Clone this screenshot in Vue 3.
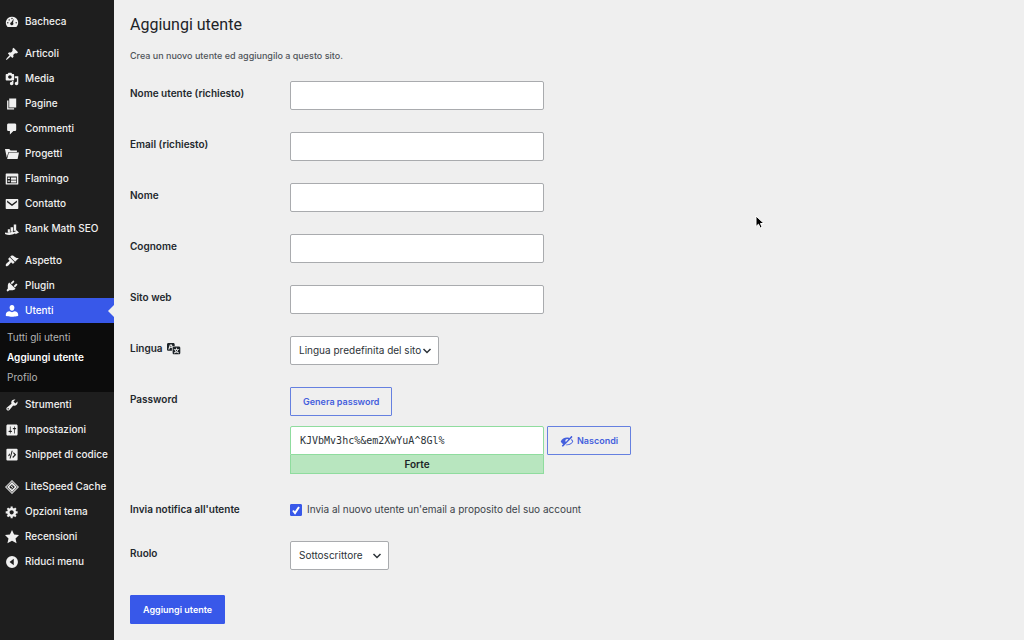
<script setup>
import { ref } from 'vue'

const icons = {
  dashboard: 'M3.76 17h12.48A8.5 8.5 0 0 0 10 2.500a8.500 8.500 0 0 0-6.240 14.500zM10 4a1 1 0 1 1 0 2 1 1 0 0 1 0-2zM6 6a1 1 0 1 1 0 2 1 1 0 0 1 0-2zM12.500 5.500L11.500 11a2.200 2.200 0 1 1-2.500-.8zM4 10a1 1 0 1 1 0 2 1 1 0 0 1 0-2zm12 0a1 1 0 1 1 0 2 1 1 0 0 1 0-2z',
  pin: 'M10.44 3.02l1.82-1.82 6.36 6.35-1.83 1.82c-1.05-.68-2.48-.57-3.41.36l-.75.75c-.92.93-1.04 2.35-.35 3.41l-1.83 1.82-2.41-2.41-2.8 2.79c-.42.42-3.38 2.71-3.8 2.29s1.86-3.39 2.28-3.81l2.79-2.79L4.1 9.36l1.83-1.82c1.05.69 2.48.57 3.4-.36l.75-.75c.93-.92 1.05-2.35.36-3.41z',
  media: 'M13 11V4c0-.55-.45-1-1-1h-1.67L9 1H5L3.67 3H2c-.55 0-1 .45-1 1v7c0 .55.45 1 1 1h10c.55 0 1-.45 1-1zM7 4.500c1.380 0 2.500 1.120 2.500 2.500S8.380 9.500 7 9.500 4.500 8.380 4.500 7 5.620 4.500 7 4.500zM14 6h5v10.500c0 1.380-1.120 2.500-2.500 2.500S14 17.880 14 16.500s1.120-2.500 2.500-2.500c.17 0 .34.02.5.05V9h-3V6zm-4 8.050V13h2v3.500c0 1.380-1.120 2.500-2.500 2.500S7 17.880 7 16.500 8.120 14 9.500 14c.17 0 .34.02.5.05z',
  page: 'M6 15V2h10v13H6zm-1 1h8v2H3V5h2v11z',
  comment: 'M5 2h9c1.100 0 2 .9 2 2v7c0 1.100-.9 2-2 2h-2l-5 5v-5H5c-1.100 0-2-.9-2-2V4c0-1.100.9-2 2-2z',
  folder: 'M0 3h6l2 2h9v2H5L2.500 15zM5.500 8H20l-2 9H3z',
  feedback: 'M2 2h16c.55 0 1 .45 1 1v14c0 .55-.45 1-1 1H2c-.55 0-1-.45-1-1V3c0-.55.45-1 1-1zM3 6.500V16h14V6.500zM4 8h3v2H4zm4.500 0H16v3H8.500zM4 12h3v2H4zm4.500 0H16v3H8.500z',
  mail: 'M2 3h16a1 1 0 0 1 1 1v12a1 1 0 0 1-1 1H2a1 1 0 0 1-1-1V4a1 1 0 0 1 1-1zM3 5v2.500l7 5.500 7-5.500V5l-7 5.500z',
  chart: 'M4 10.500h3v4.500l-3 1zM8 7.500h3.500v5L8 15zM12.500 3.500H16V12l-3.500 1zM0 15c4 1.500 8.500-.5 11-2.500l1 2 4-1.500v-1.500l4 3.500-5 2.500-.5-1.500C10 19 4 19 0 17z',
  brush: 'M14.48 11.06L7.41 3.99l1.5-1.5c.5-.56 2.3-.47 3.51.32 1.21.8 1.43 1.28 2.91 2.1 1.18.64 2.45 1.26 4.45.85zm-.71.71L6.7 4.7 4.93 6.47c-.39.39-.39 1.02 0 1.41l1.06 1.06c.39.39.39 1.03 0 1.42-.6.6-1.43 1.11-2.21 1.69-.35.26-.7.53-1.01.84C1.43 14.23.4 16.08 1.4 17.07c.99 1 2.84-.03 4.18-1.36.31-.31.58-.66.85-1.02.57-.78 1.08-1.61 1.69-2.21.39-.39 1.02-.39 1.41 0l1.06 1.06c.39.39 1.02.39 1.41 0z',
  plug: 'M13.11 4.36L9.87 7.6 8 5.73l3.24-3.24c.35-.34 1.05-.2 1.56.32.52.51.66 1.21.31 1.55zm-8 1.77l.91-1.12 9.01 9.01-1.19.84c-.71.71-2.63 1.16-3.82 1.16H6.14L4.9 17.26c-.59.59-1.54.59-2.12 0-.59-.58-.59-1.53 0-2.12l1.24-1.24v-3.88c0-1.13.4-3.19 1.09-3.89zm7.26 3.97l3.24-3.24c.34-.35 1.04-.21 1.55.31.52.51.66 1.21.31 1.55l-3.24 3.25z',
  user: 'M10 1.500c2.600 0 3.700 2.100 3.400 4.300C13.100 8 12 9.700 10 9.700S6.900 8 6.600 5.800C6.300 3.600 7.400 1.500 10 1.500zM6.500 10.200L10 11.800l3.500-1.600c3.300.2 5.300 2.300 5.300 4.600v2.400s-4 1-8.800 1-8.800-1-8.800-1v-2.400c0-2.300 2-4.400 5.300-4.600z',
  wrench: 'M16.68 9.77c-1.34 1.34-3.3 1.67-4.95.99l-5.41 6.52c-.99.99-2.59.99-3.58 0s-.99-2.59 0-3.57l6.52-5.42c-.68-1.65-.35-3.61.99-4.95 1.28-1.28 3.12-1.62 4.72-1.06l-2.89 2.89 2.82 2.82 2.86-2.87c.53 1.58.18 3.39-1.08 4.65zM3.81 16.21c.4.39 1.04.39 1.43 0 .4-.4.4-1.04 0-1.43-.39-.4-1.03-.4-1.43 0-.39.39-.39 1.03 0 1.43z',
  sliders: 'M18 16V4c0-1.1-.9-2-2-2H4c-1.1 0-2 .9-2 2v12c0 1.1.9 2 2 2h12c1.1 0 2-.9 2-2zM8 11h1c.55 0 1 .45 1 1s-.45 1-1 1H8v1.5c0 .28-.22.5-.5.5s-.5-.22-.5-.5V13H6c-.55 0-1-.45-1-1s.45-1 1-1h1V5.5c0-.28.22-.5.5-.5s.5.22.5.5V11zm5-2h-1c-.55 0-1-.45-1-1s.45-1 1-1h1V5.5c0-.28.22-.5.5-.5s.5.22.5.5V7h1c.55 0 1 .45 1 1s-.45 1-1 1h-1v5.5c0 .28-.22.5-.5.5s-.5-.22-.5-.5V9z',
  code: 'M3.500 1h13A1.500 1.500 0 0 1 18 2.500v14a1.500 1.500 0 0 1-1.500 1.500h-13A1.500 1.500 0 0 1 2 16.500v-14A1.500 1.500 0 0 1 3.500 1zM9.500 4L6.500 15H8l3-11zM7 7.500L4.500 10.500l1.200 1.500L7 10zM12.500 6l-1 1.300 2 2.500-3 3 1 1.400L16 9.800z',
  diamond: 'M10 0l10 10-10 10L0 10zM10 1.800L1.800 10l8.200 8.200 8.200-8.200zM10 3l7 7-7 7-7-7zM10 6l-4 4 4 4 4-4zM11 6.500L8 10h2l-1 3.500 3-4h-2z',
  gear: 'M18 12h-2.18c-.17.7-.44 1.35-.81 1.93l1.54 1.54-2.1 2.1-1.54-1.54c-.58.36-1.23.63-1.91.79V19H8v-2.18c-.68-.16-1.33-.43-1.91-.79l-1.54 1.54-2.12-2.12 1.54-1.54c-.36-.58-.63-1.23-.79-1.91H1V9.03h2.17c.16-.7.44-1.35.8-1.94L2.43 5.55l2.1-2.1 1.54 1.54c.58-.37 1.24-.64 1.93-.81V2h3v2.18c.68.16 1.33.43 1.91.79l1.54-1.54 2.12 2.12-1.54 1.54c.36.59.64 1.24.8 1.94H18V12zm-8.5 1.5c1.66 0 3-1.34 3-3s-1.34-3-3-3-3 1.34-3 3 1.34 3 3 3z',
  star: 'M10 0l3 6.500 7 .7-5 4.800L16.500 19 10 15.500 3.500 19 5 12 0 7.200l7-.7z',
  collapse: 'M10 1.500a8.500 8.500 0 1 1 0 17 8.500 8.500 0 0 1 0-17zM12.500 5.500L6.500 10l6 4.500z'
}

const groups = [
  [{ label: 'Bacheca', icon: 'dashboard' }],
  [
    { label: 'Articoli', icon: 'pin' },
    { label: 'Media', icon: 'media' },
    { label: 'Pagine', icon: 'page' },
    { label: 'Commenti', icon: 'comment' },
    { label: 'Progetti', icon: 'folder' },
    { label: 'Flamingo', icon: 'feedback' },
    { label: 'Contatto', icon: 'mail' },
    { label: 'Rank Math SEO', icon: 'chart' }
  ],
  [
    { label: 'Aspetto', icon: 'brush' },
    { label: 'Plugin', icon: 'plug' },
    { label: 'Utenti', icon: 'user', active: true, sub: ['Tutti gli utenti', 'Aggiungi utente', 'Profilo'] },
    { label: 'Strumenti', icon: 'wrench' },
    { label: 'Impostazioni', icon: 'sliders' },
    { label: 'Snippet di codice', icon: 'code' }
  ],
  [
    { label: 'LiteSpeed Cache', icon: 'diamond' },
    { label: 'Opzioni tema', icon: 'gear' },
    { label: 'Recensioni', icon: 'star' }
  ]
]

const fields = [
  { id: 'username', label: 'Nome utente', required: true },
  { id: 'email', label: 'Email', required: true },
  { id: 'first', label: 'Nome' },
  { id: 'last', label: 'Cognome' },
  { id: 'site', label: 'Sito web' }
]

const values = ref({ username: '', email: '', first: '', last: '', site: '' })
const password = ref('KJVbMv3hc%&em2XwYuA^8Gl%')
const notify = ref(true)
</script>

<template>
  <div class="admin">
    <nav class="sidebar" aria-label="Menu principale">
      <ul v-for="(group, g) in groups" :key="g" class="group">
        <li v-for="item in group" :key="item.label">
          <a href="#" class="item" :class="{ active: item.active }">
            <svg class="icon" viewBox="0 0 20 20" aria-hidden="true"><path fill-rule="evenodd" :d="icons[item.icon]" /></svg>
            <span>{{ item.label }}</span>
          </a>
          <ul v-if="item.sub" class="submenu">
            <li v-for="(s, i) in item.sub" :key="s"><a href="#" :class="{ current: i === 1 }">{{ s }}</a></li>
          </ul>
        </li>
      </ul>
      <button type="button" class="item collapse">
        <svg class="icon" viewBox="0 0 20 20" aria-hidden="true"><path fill-rule="evenodd" :d="icons.collapse" /></svg>
        <span>Riduci menu</span>
      </button>
    </nav>

    <main class="content">
      <h1>Aggiungi utente</h1>
      <p class="intro">Crea un nuovo utente ed aggiungilo a questo sito.</p>
      <form @submit.prevent>
        <div v-for="f in fields" :key="f.id" class="row">
          <label class="name" :for="f.id">{{ f.label }} <span v-if="f.required">(richiesto)</span></label>
          <input :id="f.id" v-model="values[f.id]" class="text" type="text">
        </div>
        <div class="row">
          <label class="name lang" for="lang">Lingua
            <svg class="translate" viewBox="0 0 20 20" aria-hidden="true"><path d="M11 7H9.49c-.63 0-1.25.3-1.59.7L7 5H4.13l-2.39 7h1.69l.74-2H7v4H2c-1.1 0-2-.9-2-2V5c0-1.1.9-2 2-2h7c1.1 0 2 .9 2 2v2zM6.51 9H4.49l1-2.93zM10 8h7c1.1 0 2 .9 2 2v7c0 1.1-.9 2-2 2h-7c-1.1 0-2-.9-2-2v-7c0-1.1.9-2 2-2zm7.25 5v-1.08h-3.17V9.75h-1.16v2.17H9.75V13h1.28c.11.85.56 1.85 1.28 2.62-.87.36-1.89.62-2.31.62-.01.02.22.97.2 1.46.84 0 2.21-.5 3.28-1.15 1.09.65 2.48 1.15 3.34 1.15-.02-.49.2-1.44.2-1.46-.43 0-1.49-.27-2.38-.63.7-.77 1.14-1.77 1.25-2.61h1.36zm-3.81 1.93c-.5-.46-.85-1.13-1.01-1.93h2.09c-.17.8-.51 1.47-1 1.93l-.04.03s-.03-.02-.04-.03z" /></svg>
          </label>
          <div class="select wide">
            <select id="lang"><option>Lingua predefinita del sito</option></select>
            <svg class="chevron" viewBox="0 0 10 10" aria-hidden="true"><path d="M1.500 3l3.500 3.500L8.500 3" /></svg>
          </div>
        </div>
        <div class="row">
          <label class="name" for="pass">Password</label>
          <div class="password">
            <button type="button" class="btn">Genera password</button>
            <div class="pass-line">
              <div class="pass-box">
                <input id="pass" v-model="password" class="text pass" type="text">
                <div class="strength">Forte</div>
              </div>
              <button type="button" class="btn hide">
                <svg class="icon" viewBox="0 0 20 20" aria-hidden="true"><path d="M17.2 3.3l.16.17c.39.39.39 1.02 0 1.41L4.55 17.7c-.39.39-1.03.39-1.41 0l-.17-.17c-.39-.39-.39-1.02 0-1.41l1.59-1.6c-1.57-1-2.76-2.3-3.56-3.93.81-1.65 2.03-2.98 3.64-3.99S8.04 5.09 10 5.09c1.2 0 2.33.21 3.4.6l2.38-2.39c.39-.39 1.03-.39 1.42 0zm-7.09 4.01c-1.36 0-2.47 1.11-2.47 2.48 0 .61.23 1.17.6 1.6l3.49-3.5c-.44-.36-1-.58-1.62-.58zM16.49 6.99c1.11.9 1.93 2.1 2.51 3.6-.81 1.65-2.03 2.98-3.64 3.99s-3.4 1.51-5.36 1.51c-.63 0-1.24-.07-1.83-.18l1.07-1.07c.25.02.5.05.76.05 1.63 0 3.13-.4 4.5-1.21s2.4-1.84 3.1-3.09c-.46-.82-1.04-1.55-1.76-2.17z" /></svg>
                Nascondi
              </button>
            </div>
          </div>
        </div>
        <div class="row notify">
          <span class="name">Invia notifica all'utente</span>
          <label class="check">
            <input v-model="notify" type="checkbox">
            <svg class="tick" viewBox="0 0 12 12" aria-hidden="true"><path d="M3 6.500L5 9l4-6" /></svg>
            Invia al nuovo utente un'email a proposito del suo account
          </label>
        </div>
        <div class="row">
          <label class="name" for="role">Ruolo</label>
          <div class="select">
            <select id="role"><option>Sottoscrittore</option></select>
            <svg class="chevron" viewBox="0 0 10 10" aria-hidden="true"><path d="M1.500 3l3.500 3.500L8.500 3" /></svg>
          </div>
        </div>
        <button type="submit" class="btn primary">Aggiungi utente</button>
      </form>
    </main>

    <svg class="pointer" viewBox="0 0 10 14" aria-hidden="true"><path d="M1 1v10.500l2.500-2.300L5.200 13l1.900-.8-1.600-3.700H9z" /></svg>
  </div>
</template>

<style>
body { background: #efefef; }
</style>

<style scoped>
.admin {
  display: flex;
  min-height: 100vh;
  background: #efefef;
  color: #2c2f33;
  font: 10px/15px Inter, sans-serif;
}
.admin *, .admin { box-sizing: border-box; }
ul { list-style: none; margin: 0; padding: 0; }
a { color: inherit; text-decoration: none; }
button, input, select { font: inherit; margin: 0; }

.sidebar { flex: none; width: 114px; padding-top: 9px; background: #1e1e1e; color: #f0f0f0; }
.group { margin-bottom: 7px; }
.group:last-of-type { margin-bottom: 0; }
.item {
  position: relative;
  display: flex;
  align-items: center;
  gap: 6px;
  width: 100%;
  height: 25px;
  padding: 0 0 0 5px;
  border: 0;
  background: none;
  color: inherit;
  font-weight: 500;
  white-space: nowrap;
}
.icon { flex: none; width: 14px; height: 14px; fill: currentColor; }
.active { background: #3858e9; color: #fff; }
.active::after {
  content: "";
  position: absolute;
  right: 0;
  top: 7px;
  border: 6px solid transparent;
  border-left: 0;
  border-right-color: #efefef;
}
.submenu { padding: 4px 0 5px; background: #0c0c0c; color: #b4b4b4; }
.submenu a { display: block; padding: 0 7px; line-height: 20px; }
.submenu .current { color: #fff; font-weight: 600; }

.content { flex: 1; min-width: 0; padding: 13px 16px; }
h1 { margin: 0; font-family: Roboto, sans-serif; font-size: 16px; line-height: 24px; font-weight: 400; color: #1d2327; }
.intro { margin: 11px 0 18px; font-size: 9px; font-weight: 500; color: #50555a; }
.row { display: grid; grid-template-columns: 160px 1fr; align-items: start; margin-bottom: 22px; }
.name { padding-top: 5px; font-weight: 600; color: #23282d; }
.lang { display: flex; gap: 4px; }
.translate { width: 14px; height: 14px; fill: #1d2327; }
.text {
  width: 100%;
  max-width: 254px;
  height: 29px;
  padding: 0 9px;
  border: 1px solid #a9abae;
  border-radius: 2px;
  background: #fff;
  color: #2c3338;
}
.select { position: relative; width: 99px; }
.wide { width: 149px; }
select {
  appearance: none;
  width: 100%;
  height: 29px;
  padding: 0 0 0 8px;
  border: 1px solid #a9abae;
  border-radius: 2px;
  background: #fff;
  color: #2c3338;
}
.chevron { position: absolute; right: 7px; top: 10px; width: 10px; height: 10px; fill: none; stroke: #2c3338; stroke-width: 1.5; pointer-events: none; }
.btn {
  display: inline-flex;
  align-items: center;
  justify-content: center;
  height: 29px;
  padding: 0 12px;
  border: 1px solid #6580e0;
  border-radius: 1px;
  background: none;
  color: #4560dd;
  font-size: 9px;
  font-weight: 600;
  white-space: nowrap;
}
.password { display: grid; justify-items: start; gap: 10px; }
.pass-line { display: flex; gap: 3px; }
.pass-box { width: 254px; }
.pass { display: block; border-color: #8fdc9e; border-radius: 2px 2px 0 0; font-family: "DejaVu Sans Mono", monospace; }
.strength {
  height: 19px;
  border: 1px solid #8fdc9e;
  border-top: 0;
  background: #b8e6bf;
  color: #1d2327;
  font-weight: 600;
  line-height: 18px;
  text-align: center;
}
.hide { gap: 3px; }
.notify { margin: 28px 0 24px; }
.notify .name { padding-top: 0; }
.check { position: relative; display: flex; align-items: center; gap: 5px; color: #3c434a; }
.check input { appearance: none; width: 12px; height: 12px; border: 1px solid #3858e9; border-radius: 1px; background: #fff; }
.check input:checked { background: #3858e9; }
.tick { position: absolute; left: 0; top: 2px; width: 12px; height: 12px; fill: none; stroke: #fff; stroke-width: 2; pointer-events: none; }
.check input:not(:checked) + .tick { display: none; }
.primary { margin-top: 3px; border-color: #3858e9; background: #3858e9; color: #fff; }
.pointer { position: absolute; left: 755px; top: 215px; width: 10px; height: 14px; fill: #000; stroke: #fff; stroke-width: 1; pointer-events: none; }
</style>
